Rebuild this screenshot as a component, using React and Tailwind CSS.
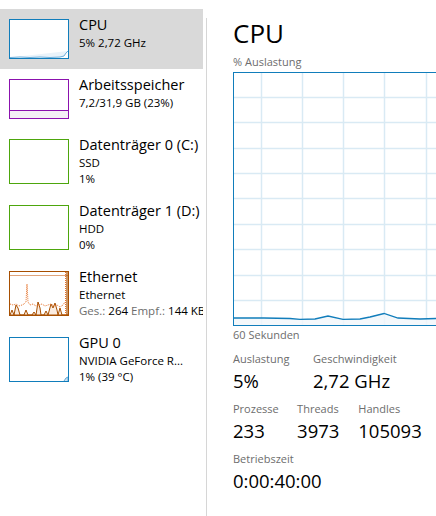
const items = [
  { title: "CPU", lines: ["5% 2,72 GHz"], color: "#117dbb", kind: "cpu", selected: true },
  { title: "Arbeitsspeicher", lines: ["7,2/31,9 GB (23%)"], color: "#8b12ae", kind: "mem" },
  { title: "Datenträger 0 (C:)", lines: ["SSD", "1%"], color: "#4da60c", kind: "disk" },
  { title: "Datenträger 1 (D:)", lines: ["HDD", "0%"], color: "#4da60c", kind: "disk" },
  { title: "Ethernet", lines: ["Ethernet", "net"], color: "#a74f01", kind: "eth" },
  { title: "GPU 0", lines: ["NVIDIA GeForce R...", "1% (39 °C)"], color: "#117dbb", kind: "gpu" },
];

function Thumb({ kind, color, tall }) {
  const h = tall ? 43 : 38;
  return (
    <div
      className={`w-[60px] shrink-0 border bg-white ${tall ? "h-[45px]" : "h-[40px]"}`}
      style={{ borderColor: color }}
    >
      <svg width="58" height={h} viewBox={`0 0 58 ${h}`} className="block">
        {kind === "cpu" && (
          <polyline
            points="0,37.5 10,37 20,37.5 30,37 40,37.5 50,37 54,36 56,33 58,31"
            fill="#eaf3fa"
            stroke="#6fb0dc"
            strokeWidth="1"
          />
        )}
        {kind === "mem" && (
          <>
            <rect x="0" y="30" width="58" height="8" fill="#f4f0f5" />
            <line x1="0" y1="30.5" x2="58" y2="30.5" stroke="#8b12ae" strokeWidth="1" />
          </>
        )}
        {kind === "gpu" && (
          <polyline points="54,43 56,40 58,39 58,43" fill="#cfe3f2" stroke="#5fa6d6" strokeWidth="1" />
        )}
        {kind === "eth" && (
          <>
            <line x1="0" y1="3.5" x2="58" y2="3.5" stroke="#dfa57c" strokeWidth="1" />
            <polygon
              points="0,43 2,38 4,43 6,33 8,36 10,43 14,43 16,38 18,43 22,43 24,40 26,43 28,30 30,36 31,43 34,43 36,39 38,43 41,32 43,36 45,31 47,38 48,43 50,36 52,43 58,43"
              fill="#fbece0"
              stroke="#a74f01"
              strokeWidth="1"
            />
            <polyline
              points="0,32 3,33 6,32 9,34 12,33 14,32 16,30 17,12 18,30 20,33 23,32 26,34 29,33 32,32 35,34 38,33 41,32 44,34 47,33 50,35 53,33 55,30"
              fill="none"
              stroke="#e6722a"
              strokeWidth="1"
              strokeDasharray="1 1"
            />
            <line x1="55.5" y1="0" x2="55.5" y2="43" stroke="#e6722a" strokeWidth="1" strokeDasharray="1 1" />
            <line x1="57" y1="0" x2="57" y2="43" stroke="#a74f01" strokeWidth="1.2" />
          </>
        )}
      </svg>
    </div>
  );
}

function SideItem({ item }) {
  const tall = item.lines.length > 1;
  return (
    <div
      className={`flex gap-[10px] pl-[9px] pt-[10px] ${tall ? "h-[66px]" : "h-[60px]"} ${
        item.selected ? "bg-[#d9d9d9]" : ""
      }`}
    >
      <Thumb kind={item.kind} color={item.color} tall={tall} />
      <div className="-mt-[4px] min-w-0 whitespace-nowrap text-black">
        <div className="text-[14.5px] leading-[20px]">{item.title}</div>
        {item.lines.map((l, i) =>
          l === "net" ? (
            <div key={i} className="text-[11.5px] leading-[16px]">
              <span className="text-[#6d6d6d]">Ges.: </span>264{" "}
              <span className="text-[#6d6d6d]">Empf.: </span>144 KBit/s
            </div>
          ) : (
            <div key={i} className="text-[11.5px] leading-[16px]">
              {l}
            </div>
          )
        )}
      </div>
    </div>
  );
}

function Chart() {
  const hLines = [24, 49, 75, 100, 125, 151, 176, 202, 227];
  const vLines = [27, 68, 109, 150, 192];
  const pts =
    "0,245 11,245 30,245 56,245.5 66,246.3 81,246 94,243 109,246.3 126,246 136,244 150,240.5 164,245 186,246 202,245.5 240,245.5";
  return (
    <div className="mt-[3px] h-[254px] w-[260px] border border-[#117dbb] bg-white">
      <svg width="258" height="252" className="block">
        {hLines.map((y) => (
          <line key={y} x1="0" x2="258" y1={y + 0.5} y2={y + 0.5} stroke="#d9eaf4" strokeWidth="1.5" />
        ))}
        {vLines.map((x) => (
          <line key={x} x1={x + 0.5} x2={x + 0.5} y1="0" y2="252" stroke="#d9eaf4" strokeWidth="1.5" />
        ))}
        <polygon points={`${pts} 240,252 0,252`} fill="#f1f6fa" fillOpacity="0.8" />
        <polyline points={pts} fill="none" stroke="#117dbb" strokeWidth="1.3" />
      </svg>
    </div>
  );
}

function Stat({ label, value, w }) {
  return (
    <div className={w}>
      <div className="text-[11px] leading-[14px] text-[#6d6d6d]">{label}</div>
      <div className="mt-[3px] text-[18.5px] leading-[24px] text-black">{value}</div>
    </div>
  );
}

export default function App() {
  return (
    <div className="flex h-[516px] w-[436px] overflow-hidden bg-white font-['Open_Sans',sans-serif]">
      <aside className="w-[203px] shrink-0 overflow-hidden pt-[9px]">
        {items.map((it) => (
          <SideItem key={it.title} item={it} />
        ))}
      </aside>
      <div className="w-[3px] shrink-0" />
      <div className="mt-[18px] w-px shrink-0 bg-[#d6d6d6]" />
      <main className="min-w-0 flex-1 overflow-hidden pl-[26px] pt-[17px]">
        <h1 className="text-[26px] leading-[32px] text-black">CPU</h1>
        <div className="mt-[6px] text-[11px] leading-[14px] text-[#6d6d6d]">% Auslastung</div>
        <Chart />
        <div className="mt-[2px] text-[11px] leading-[14px] text-[#6d6d6d]">60 Sekunden</div>
        <div className="mt-[10px] flex">
          <Stat label="Auslastung" value="5%" w="w-[80px]" />
          <Stat label="Geschwindigkeit" value="2,72 GHz" w="w-[100px]" />
        </div>
        <div className="mt-[9px] flex">
          <Stat label="Prozesse" value="233" w="w-[66px]" />
          <Stat label="Threads" value="3973" w="w-[63px]" />
          <Stat label="Handles" value="105093" w="w-[80px]" />
        </div>
        <div className="mt-[9px] flex">
          <Stat label="Betriebszeit" value="0:00:40:00" w="w-[120px]" />
        </div>
      </main>
    </div>
  );
}
